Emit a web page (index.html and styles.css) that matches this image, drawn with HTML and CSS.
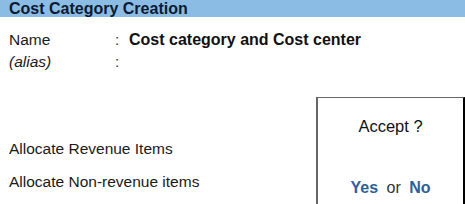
FILE: index.html
```html
<!DOCTYPE html>
<html>
<head>
  <meta charset="UTF-8">
  <title>Cost Category Creation</title>
  <link rel="stylesheet" href="styles.css">
</head>
<body>
  <div class="screen">
    <div class="title-bar">Cost Category Creation</div>

    <div class="form">
      <div class="field">
        <span class="label">Name</span>
        <span class="colon">:</span>
        <span class="value">Cost category and Cost center</span>
      </div>
      <div class="field">
        <span class="label alias">(alias)</span>
        <span class="colon">:</span>
        <span class="value"></span>
      </div>

      <div class="options">
        <div class="option">Allocate Revenue Items</div>
        <div class="option">Allocate Non-revenue items</div>
      </div>
    </div>

    <!-- confirm popup -->
    <div class="accept-box">
      <div class="accept-title">Accept ?</div>
      <div class="accept-choice">
        <span class="choice">Yes</span>
        <span class="or">or</span>
        <span class="choice">No</span>
      </div>
    </div>
  </div>
</body>
</html>
```

FILE: styles.css
```css
body {
  margin: 0;
  background: #fff;
  font-family: "Liberation Sans", Arial, sans-serif;
  color: #1a1a1a;
}

.screen {
  position: relative;
  width: 465px;
  height: 204px;
  overflow: hidden;
}

.title-bar {
  height: 17px;
  line-height: 17px;
  padding-left: 9px;
  background-color: #8BBCE3;
  color: #0B1A33;
  font-size: 16px;
  font-weight: bold;
}

.form {
  padding: 12px 0 0 9px;
}

.field {
  display: flex;
  align-items: center;
  height: 22px;
  font-size: 15.5px;
}

.label {
  width: 106px;
}

.alias {
  font-style: italic;
}

.colon {
  width: 14px;
  color: #333;
}

.value {
  font-weight: bold;
  font-size: 16px;
  color: #111;
}

.options {
  display: flex;
  flex-direction: column;
  gap: 11px;
  margin-top: 65px;
}

.option {
  height: 22px;
  line-height: 22px;
  font-size: 15.5px;
}

.accept-box {
  position: absolute;
  left: 316px;
  top: 97px;
  width: 145px;
  height: 120px;
  border-top: 1px solid #666;
  border-left: 2px solid #666;
  border-right: 2px solid #000;
  text-align: center;
}

.accept-title {
  margin-top: 19px;
  font-size: 16.5px;
  color: #111;
}

.accept-choice {
  margin-top: 43px;
  font-size: 16px;
}

.choice {
  color: #2F5F98;
  font-weight: bold;
}

.or {
  margin: 0 4px;
  color: #333;
}
```
